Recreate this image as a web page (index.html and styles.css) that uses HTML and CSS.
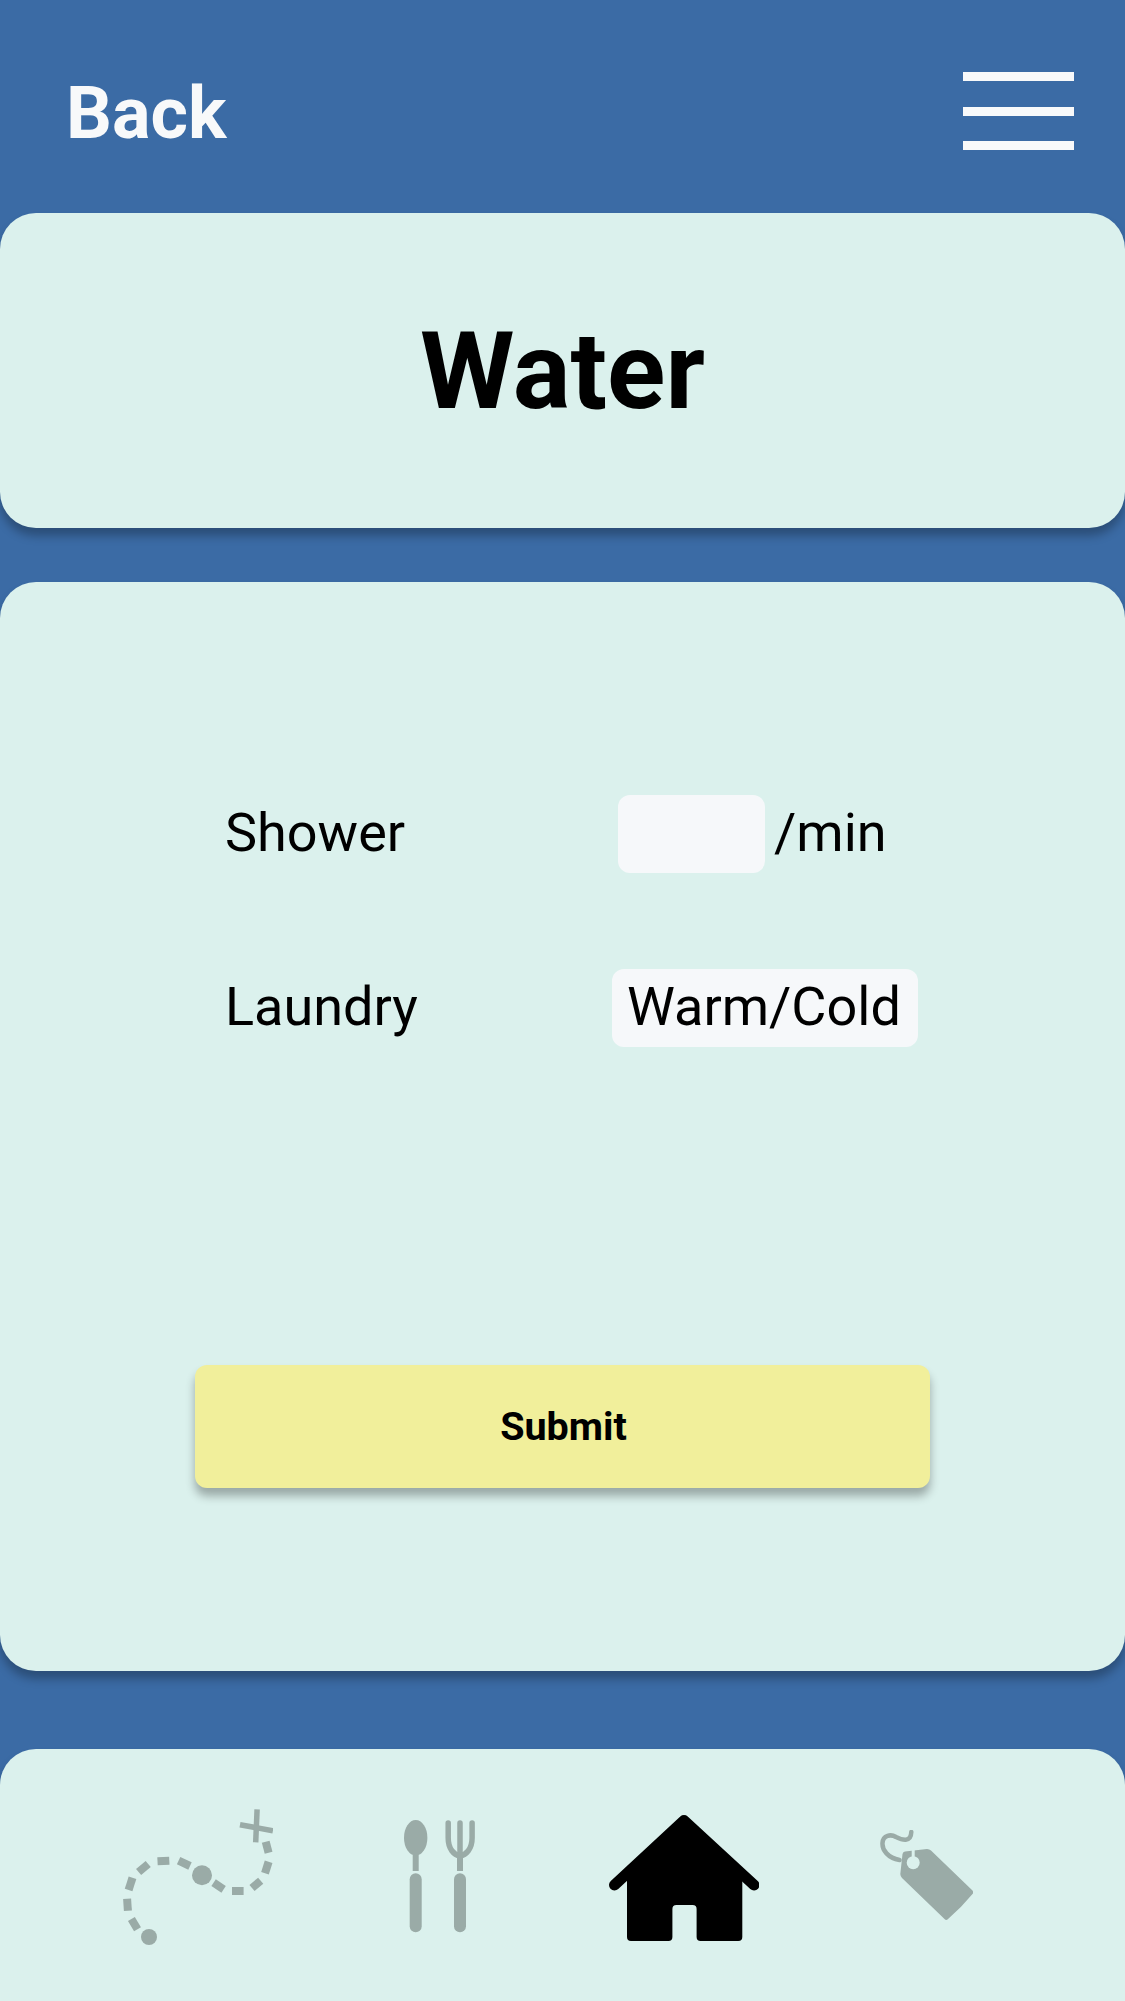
FILE: index.html
```html
<!DOCTYPE html>
<html lang="en">
<head>
	<meta charset="UTF-8">
	<title>Water</title>
	<link rel="stylesheet" href="styles.css">
</head>
<body>
	<div class="top">
		<a class="back">Back</a>
		<div class="menu"><span></span><span></span><span></span></div>
	</div>

	<div class="card title-card">
		<h1>Water</h1>
	</div>

	<div class="card form-card">
		<div class="row">
			<label class="name">Shower</label>
			<input class="inp" type="text">
			<span class="unit">/min</span>
		</div>
		<div class="row row2">
			<label class="name">Laundry</label>
			<div class="pick">Warm/Cold</div>
		</div>
		<button class="submit" type="button">Submit</button>
	</div>

	<div class="card nav">
		<svg class="ico ico-map" width="150" height="136" viewBox="0 0 150 136">
			<circle class="fill" cx="79" cy="66.3" r="10"/>
			<circle class="fill" cx="26" cy="128" r="8"/>
			<g class="dash">
				<path d="M8.4 110L14.5 120.3"/>
				<path d="M4.1 89.7L4.9 101.7"/>
				<path d="M9.5 68.7L5.6 81"/>
				<path d="M25.2 55L15.6 63"/>
				<path d="M46.3 51.7L34.5 52.3"/>
				<path d="M67 57L55.6 51.7"/>
				<path d="M90.6 73.7L100.6 80.3"/>
				<path d="M109 82L120.6 82"/>
				<path d="M137.7 71.7L129 79"/>
				<path d="M145.6 52.7L142 64.3"/>
				<path d="M142.7 32.7L145.6 43.7"/>
			</g>
			<g class="cross">
				<path d="M134.1 0.3L132.7 33.3"/>
				<path d="M117 15.7L149.9 21.7"/>
			</g>
		</svg>
		<svg class="ico ico-food" width="71" height="113" viewBox="0 0 71 113">
			<ellipse class="fill" cx="11.7" cy="17.7" rx="11.7" ry="17.7"/>
			<rect class="fill" x="8.7" y="30" width="6" height="21"/>
			<rect class="fill" x="5.7" y="53.3" width="12" height="59" rx="6"/>
			<path class="tines" d="M44.2 3V18C44.2 29 50 35 56 36C62 35 68.1 29 68.1 18V3M56 3V36"/>
			<rect class="fill" x="53" y="34" width="6" height="17"/>
			<rect class="fill" x="50" y="53.3" width="12" height="59" rx="6"/>
		</svg>
		<svg class="ico ico-home" width="150" height="126" viewBox="0 0 150 126">
			<path class="roof" d="M5.5 70L75 5.5L145 70"/>
			<path d="M18 62L75 8L133.300 62V122a4 4 0 0 1-4 4H91.600a4 4 0 0 1-4-4V94a4 4 0 0 0-4-4H67.400a4 4 0 0 0-4 4V122a4 4 0 0 1-4 4H22a4 4 0 0 1-4-4Z"/>
		</svg>
		<svg class="ico ico-tag" width="93" height="90" viewBox="0 0 93 90">
			<path class="fill" d="M22.500 24Q23 21.500 25 21.500L47 19Q49.500 19 51 20.500L92.500 60.500Q93.800 62.500 92.500 64Q81 78 67.500 89.500Q66 90.500 64.500 89L22 48Q20.300 46 20.300 44Z"/>
			<circle class="hole" cx="33.200" cy="32.700" r="6.500"/>
			<path class="slit" d="M33.200 20V30"/>
			<path class="string" d="M19.500 30C8 28 2 20 2.500 13C3 5 11 4 16 7C22 10 31 13 31.300 2"/>
		</svg>
	</div>
</body>
</html>
```

FILE: styles.css
```css
*{margin: 0;padding: 0;box-sizing: border-box;font-family: Roboto, "Liberation Sans", sans-serif}
html,body{height: 100%;overflow: hidden}
body{background: #3b6ba5;color: #000}

.top{height: 213px;display: flex;justify-content: space-between;align-items: flex-start;padding: 72px 51px 0 66px}
.back{color: #f8f9fa;font-size: 72px;font-weight: 700;line-height: 80px;margin-top: 2px}
.menu{width: 111px;height: 78px;display: flex;flex-direction: column;justify-content: space-between}
.menu span{display: block;height: 9px;background: #f8f9fa}

.card{background: #dbf1ed;border-radius: 36px;box-shadow: 0 8px 10px rgba(0,0,0,.27)}
.title-card{height: 315px;display: flex;align-items: center;justify-content: center}
.title-card h1{font-size: 108px;font-weight: 700;line-height: 120px}

.form-card{height: 1089px;margin-top: 54px;padding-top: 213px}
.row{display: flex;align-items: center;height: 78px;padding-left: 225px;font-size: 54px}
.row2{margin-top: 96px}
.name{width: 393px;font-size: 54px;margin-bottom: 3px}
.inp{width: 147px;height: 78px;border: none;outline: none;background: #f6f8fa;border-radius: 12px}
.unit{margin-left: 9px;margin-bottom: 3px}
.pick{width: 306px;height: 78px;line-height: 75px;margin-left: -6px;padding-left: 15px;background: #f6f8fa;border-radius: 12px}
.submit{display: block;width: 735px;height: 123px;margin: 318px auto 0;padding-left: 2px;border: none;border-radius: 12px;background: #f1ef9b;box-shadow: 0 8px 10px rgba(0,0,0,.3);font-size: 39.5px;font-weight: 700}

.nav{height: 252px;margin-top: 78px;border-radius: 36px 36px 0 0;display: flex;align-items: flex-start;padding-left: 123px}
.ico{display: block;flex: none}
.ico-map{margin-top: 60px}
.ico-food{margin-top: 71px;margin-left: 131px}
.ico-home{margin-top: 66px;margin-left: 134px}
.ico-tag{margin-top: 81px;margin-left: 121px}

.fill{fill: #9aaba7}
.dash path{fill: none;stroke: #9aaba7;stroke-width: 8}
.cross path{fill: none;stroke: #9aaba7;stroke-width: 5.5}
.tines{fill: none;stroke: #9aaba7;stroke-width: 5.5;stroke-linecap: round}
.roof{fill: none;stroke: #000;stroke-width: 11;stroke-linecap: round;stroke-linejoin: round}
.hole{fill: #dbf1ed}
.slit{fill: none;stroke: #dbf1ed;stroke-width: 3}
.string{fill: none;stroke: #9aaba7;stroke-width: 4.5;stroke-linecap: round}
```
